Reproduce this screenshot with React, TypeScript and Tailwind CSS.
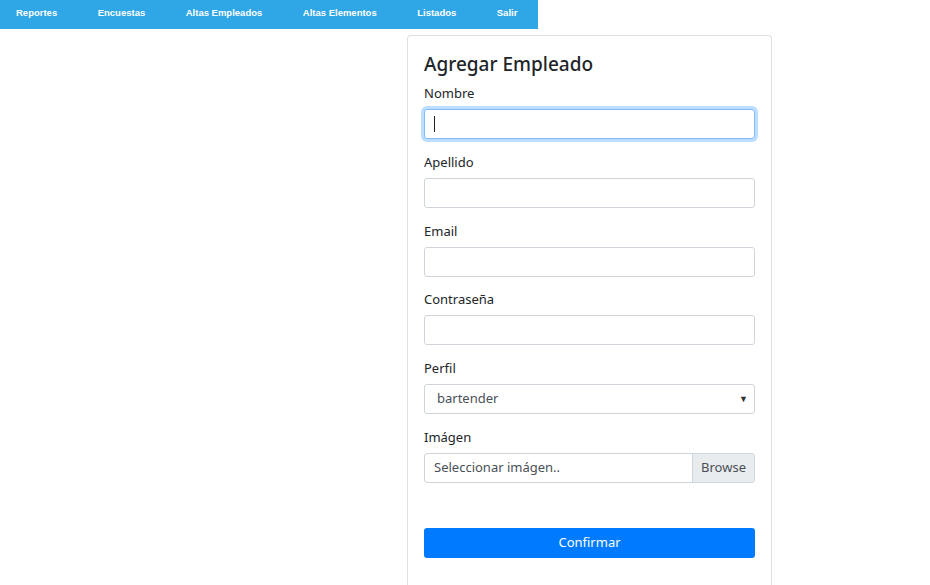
import React from "react";

const navItems = ["Reportes", "Encuestas", "Altas Empleados", "Altas Elementos", "Listados", "Salir"];

function Label({ children }: { children: React.ReactNode }) {
  return <div className="mb-[6px] text-[13px] leading-[19px] text-[#212529]">{children}</div>;
}

function TextInput() {
  return <div className="h-[30px] w-full rounded-[3px] border border-[#ced4da] bg-white" />;
}

export default function App() {
  return (
    <div className="min-h-[585px] bg-white" style={{ fontFamily: '"Noto Sans", "Open Sans", sans-serif' }}>
      <nav className="flex h-[29px] w-[538px] items-center bg-[#2fa6e5] pb-[3px] pl-4">
        {navItems.map((n) => (
          <span
            key={n}
            className="mr-[40.5px] shrink-0 whitespace-nowrap text-[9.5px] font-bold text-white"
            style={{ fontFamily: '"Liberation Sans", Arial, sans-serif' }}
          >
            {n}
          </span>
        ))}
      </nav>
      <div className="flex pt-[6px]">
        <div className="ml-[407px] h-[560px] w-[365px] rounded-t-[4px] border border-b-0 border-[#dfdfdf] px-4 pt-[14px]">
          <h3 className="mb-[6px] text-[19px] font-medium leading-[28px] text-[#212529]">Agregar Empleado</h3>

          <div className="mb-[13.8px]">
            <Label>Nombre</Label>
            <div className="flex h-[30px] w-full items-center rounded-[3px] border border-[#80bdff] bg-white shadow-[0_0_0_3px_rgba(0,123,255,0.25)]">
              <div className="ml-[9px] h-[16px] w-px bg-[#222]" />
            </div>
          </div>
          <div className="mb-[13.8px]">
            <Label>Apellido</Label>
            <TextInput />
          </div>
          <div className="mb-[13.8px]">
            <Label>Email</Label>
            <TextInput />
          </div>
          <div className="mb-[13.8px]">
            <Label>Contraseña</Label>
            <TextInput />
          </div>
          <div className="mb-[13.8px]">
            <Label>Perfil</Label>
            <div className="flex h-[30px] w-full items-center justify-between rounded-[3px] border border-[#ced4da] bg-white pl-[12px] pr-[6px] text-[13px] text-[#495057]">
              <span>bartender</span>
              <span className="text-[9px] text-[#333]">▼</span>
            </div>
          </div>
          <div className="mb-[13.8px]">
            <Label>Imágen</Label>
            <div className="flex h-[30px] w-full items-center overflow-hidden rounded-[3px] border border-[#ced4da] bg-white text-[13px] text-[#495057]">
              <span className="flex-1 pl-[9px]">Seleccionar imágen..</span>
              <span className="flex h-full items-center border-l border-[#ced4da] bg-[#e9ecef] px-[8px]">Browse</span>
            </div>
          </div>
          <button className="mt-[45px] flex h-[30px] w-full items-center justify-center rounded-[3px] bg-[#007bff] text-[13px] text-white">
            Confirmar
          </button>
        </div>
      </div>
    </div>
  );
}
